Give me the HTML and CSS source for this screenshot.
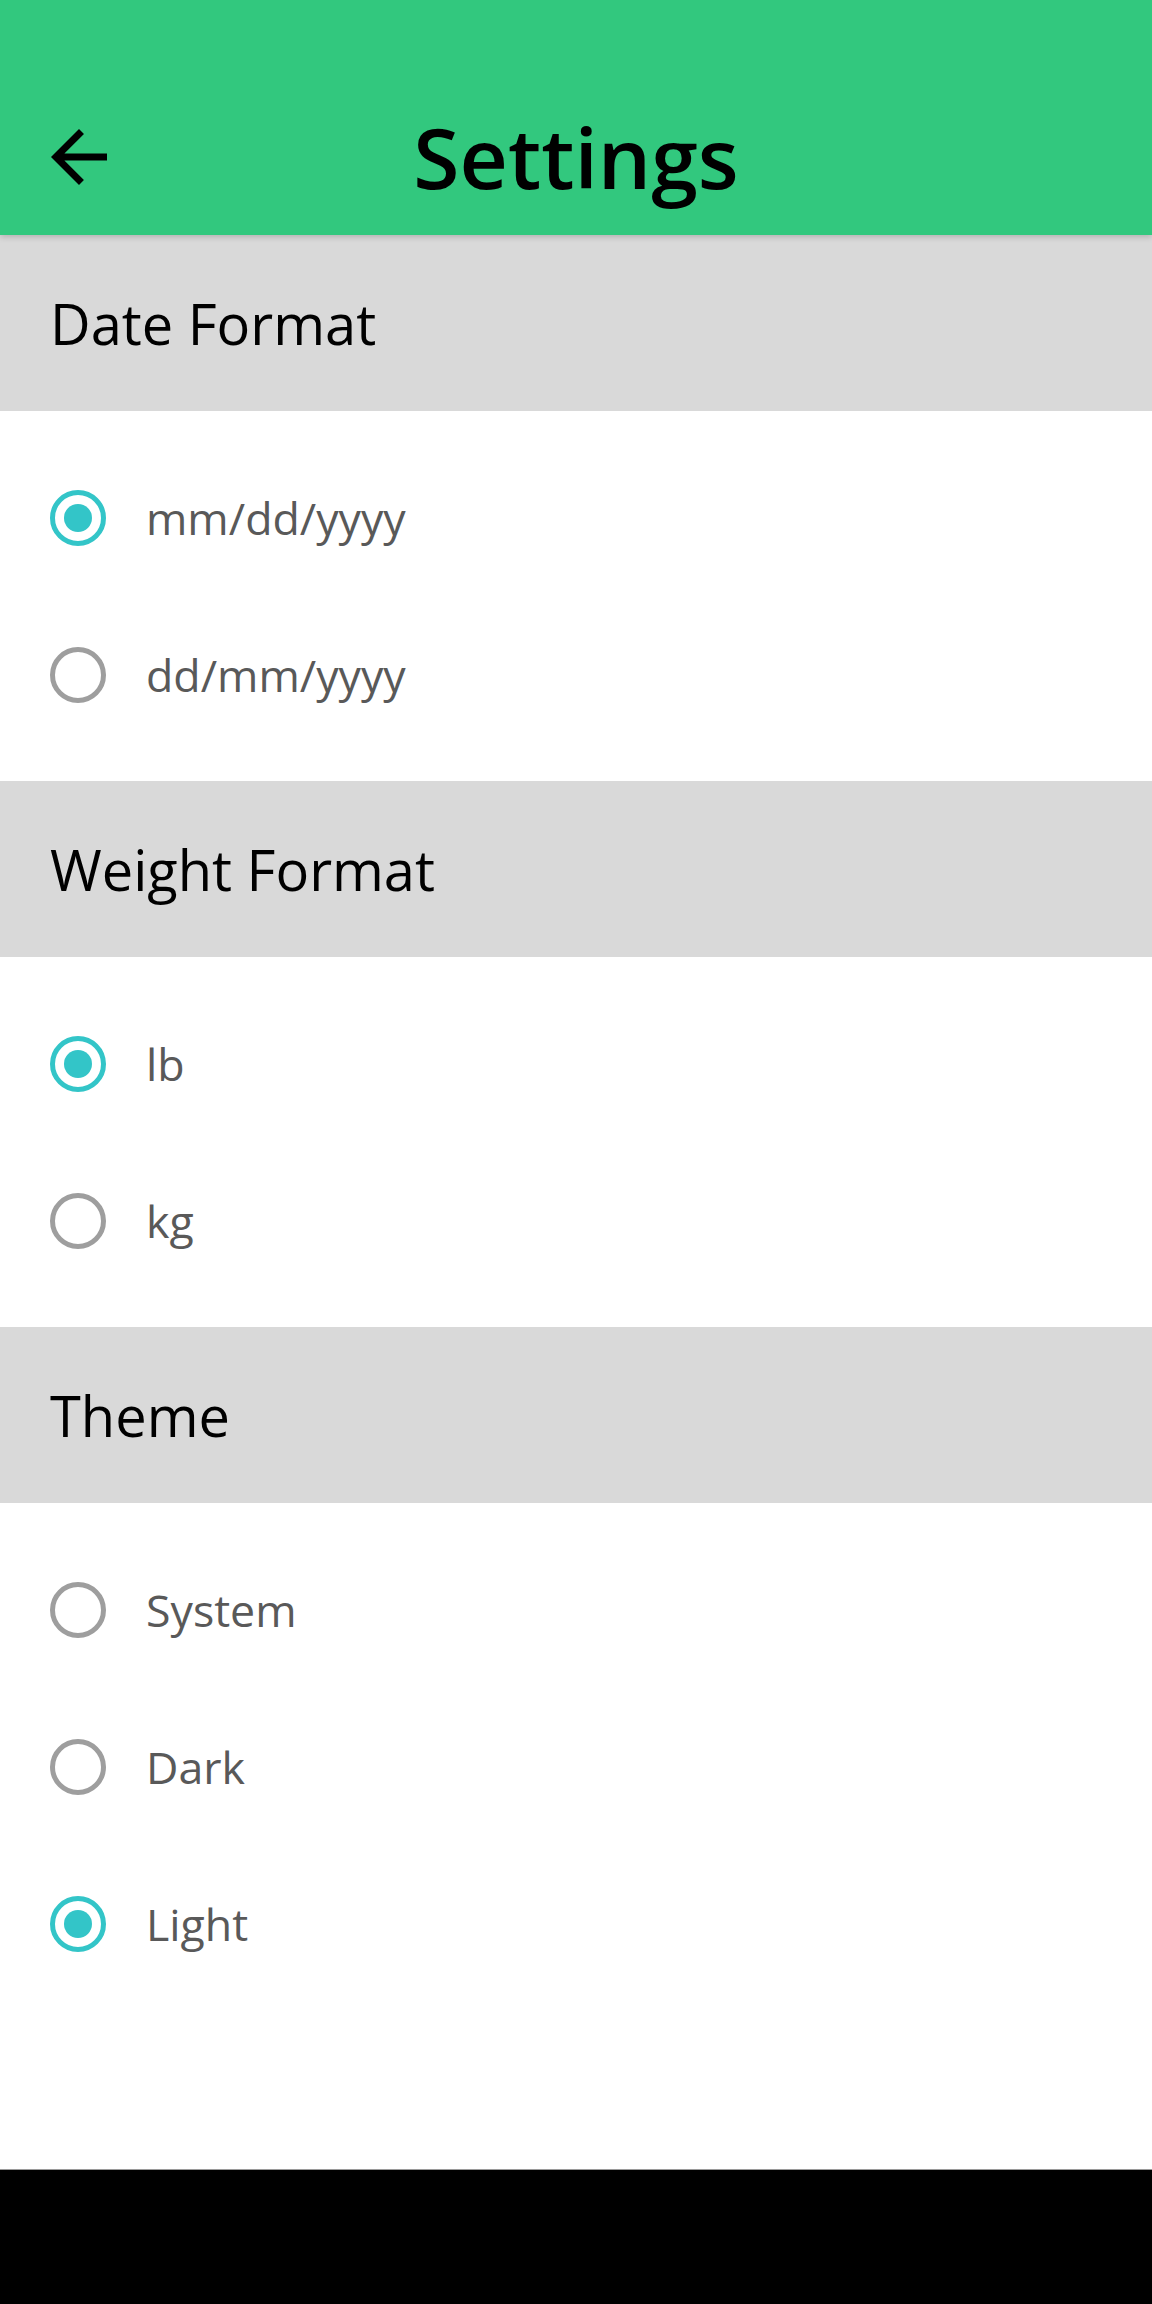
FILE: index.html
```html
<!DOCTYPE html>
<html>
<head>
<meta charset="utf-8">
<link rel="stylesheet" href="styles.css">
</head>
<body>
<div class="screen">
  <header class="appbar">
    <div class="toolbar">
      <div class="back">
        <svg viewBox="0 0 24 24" width="84" height="84"><path d="M20 11H7.83l5.59-5.59L12 4l-8 8 8 8 1.41-1.41L7.83 13H20v-2z" fill="#000"/></svg>
      </div>
      <h1 class="title">Settings</h1>
      <div class="spacer"></div>
    </div>
  </header>

  <section class="group">
    <div class="group-head">Date Format</div>
    <div class="options">
      <div class="option"><span class="radio checked"></span><span class="label">mm/dd/yyyy</span></div>
      <div class="option"><span class="radio"></span><span class="label">dd/mm/yyyy</span></div>
    </div>
  </section>

  <section class="group">
    <div class="group-head">Weight Format</div>
    <div class="options">
      <div class="option"><span class="radio checked"></span><span class="label">lb</span></div>
      <div class="option"><span class="radio"></span><span class="label">kg</span></div>
    </div>
  </section>

  <section class="group">
    <div class="group-head">Theme</div>
    <div class="options">
      <div class="option"><span class="radio"></span><span class="label">System</span></div>
      <div class="option"><span class="radio"></span><span class="label">Dark</span></div>
      <div class="option"><span class="radio checked"></span><span class="label">Light</span></div>
    </div>
  </section>

  <div class="filler"></div>
  <div class="navbar"></div>
</div>
</body>
</html>
```

FILE: styles.css
```css
html, body {
  margin: 0;
  padding: 0;
  background: #ffffff;
}
.screen {
  width: 1152px;
  height: 2304px;
  display: flex;
  flex-direction: column;
  font-family: "Open Sans", "Noto Sans", sans-serif;
  overflow: hidden;
}
.appbar {
  height: 235px;
  box-sizing: border-box;
  padding-top: 78px;
  background: #32c87e;
  box-shadow: 0 2px 6px rgba(0,0,0,0.18);
  position: relative;
  z-index: 2;
  flex: none;
}
.toolbar {
  height: 157px;
  display: grid;
  grid-template-columns: 1fr auto 1fr;
  align-items: center;
}
.back {
  padding-left: 37px;
  display: flex;
  align-items: center;
}
.back svg { display: block; }
.title {
  margin: 0;
  font-size: 84px;
  font-weight: 600;
  color: #000;
  line-height: 114px;
}
.group { flex: none; }
.group-head {
  height: 176px;
  background: #d9d9d9;
  display: flex;
  align-items: center;
  padding-left: 50px;
  font-size: 56px;
  color: #000;
}
.options {
  padding: 28px 0;
  display: flex;
  flex-direction: column;
}
.option {
  height: 157px;
  display: flex;
  align-items: center;
  padding-left: 50px;
}
.radio {
  width: 56px;
  height: 56px;
  box-sizing: border-box;
  border: 5.6px solid #9e9e9e;
  border-radius: 50%;
  display: flex;
  align-items: center;
  justify-content: center;
  flex: none;
}
.radio.checked {
  border-color: #33c5c8;
}
.radio.checked::after {
  content: "";
  width: 28px;
  height: 28px;
  border-radius: 50%;
  background: #33c5c8;
}
.label {
  margin-left: 40px;
  font-size: 44.7px;
  color: #595959;
}
.filler { flex: 1; }
.navbar {
  height: 135px;
  flex: none;
  box-sizing: border-box;
  background: #000;
  border-top: 1px solid #9a9a9a;
}
```
